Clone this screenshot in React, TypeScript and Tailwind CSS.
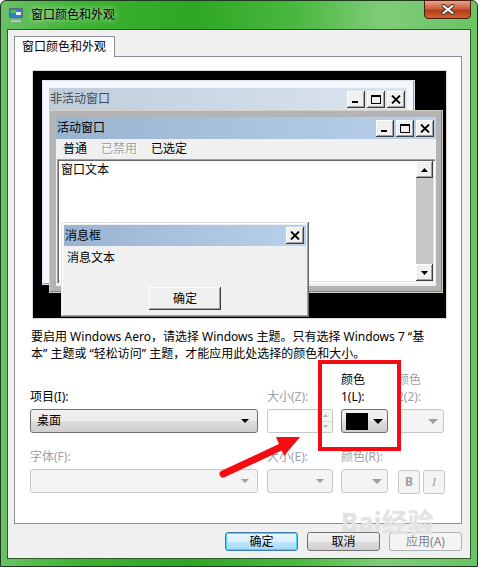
import React from "react"

const FONT = "font-['Noto_Sans','Noto_Sans_CJK_SC',sans-serif]"

function CapBtn({ kind }: { kind: "min" | "max" | "close" }) {
  return (
    <div className="w-[18px] h-[17px] bg-[#f0f0f0] shadow-[inset_-1px_-1px_0_#404040,inset_1px_1px_0_#ffffff,inset_-2px_-2px_0_#a0a0a0] flex items-center justify-center">
      <svg width="10" height="9" viewBox="0 0 10 9">
        {kind === "min" && <rect x="1" y="6" width="6" height="2" fill="#000" />}
        {kind === "max" && (
          <g fill="none" stroke="#000">
            <rect x="0.5" y="0.5" width="9" height="8" />
            <line x1="0" y1="1.5" x2="10" y2="1.5" />
          </g>
        )}
        {kind === "close" && (
          <g stroke="#000" strokeWidth="1.8">
            <line x1="1" y1="0.5" x2="9" y2="8.5" />
            <line x1="9" y1="0.5" x2="1" y2="8.5" />
          </g>
        )}
      </svg>
    </div>
  )
}

function DownTri({ color = "#000", w = 8 }: { color?: string; w?: number }) {
  return (
    <svg width={w} height={w / 2} viewBox="0 0 8 4">
      <polygon points="0,0 8,0 4,4" fill={color} />
    </svg>
  )
}

function Combo({ text, disabled, className }: { text?: string; disabled?: boolean; className: string }) {
  return (
    <div
      className={
        "h-[24px] rounded-[3px] border flex items-center justify-between pl-[6px] pr-[8px] " +
        (disabled
          ? "border-[#c5c8cb] bg-[#f4f4f4] "
          : "border-[#707070] bg-[linear-gradient(#f2f2f2_0%,#ebebeb_50%,#dddddd_51%,#cfcfcf_100%)] ") +
        className
      }
    >
      <span className="text-[12px] text-black">{text}</span>
      <DownTri color={disabled ? "#a0a0a0" : "#000"} />
    </div>
  )
}

function WinBtn({ label, variant }: { label: string; variant?: "default" | "disabled" }) {
  const base = "w-[73px] h-[19px] rounded-[3px] border flex items-center justify-center text-[12px] leading-none "
  if (variant === "default")
    return (
      <div className={base + "border-[#3c7fb1] bg-[linear-gradient(#eaf6fd_0%,#d9f0fc_50%,#bee6fd_51%,#a7d9f5_100%)] shadow-[inset_0_0_0_1px_#48d2f8]"}>
        {label}
      </div>
    )
  if (variant === "disabled")
    return <div className={base + "border-[#adb2b5] bg-[#f4f4f4] text-[#838383]"}>{label}</div>
  return (
    <div className={base + "border-[#707070] bg-[linear-gradient(#f2f2f2_0%,#ebebeb_50%,#dddddd_51%,#cfcfcf_100%)]"}>
      {label}
    </div>
  )
}

function Preview() {
  return (
    <div className="relative ml-[17px] mt-[13px] w-[415px] h-[249px] bg-black border border-[#d8d8d8] overflow-hidden">
      {/* inactive window */}
      <div className="absolute left-[9px] top-[9px] w-[373px] h-[205px] bg-[#f4f7fc] border border-[#dde4ee] shadow-[inset_-1px_-1px_0_#a0a0a0]">
        <div className="mt-[7px] ml-[6px] w-[358px] h-[22px] bg-[linear-gradient(90deg,#bfcddb,#dbe5f0)] flex items-center justify-between pl-[1px] pr-[2px]">
          <span className="text-[12px] text-[#434e54]">非活动窗口</span>
          <div className="flex gap-[2px]">
            <CapBtn kind="min" />
            <CapBtn kind="max" />
            <CapBtn kind="close" />
          </div>
        </div>
      </div>
      {/* active window */}
      <div className="absolute left-[16px] top-[39px] w-[394px] h-[183px] bg-[#b4b4b4] border border-[#d4d0c8] shadow-[inset_-1px_-1px_0_#808080] p-[6px]">
        <div className="w-full h-full bg-[#f0f0f0] flex flex-col">
          <div className="h-[22px] bg-[linear-gradient(90deg,#99b4d1,#b9d1ea)] flex items-center justify-between pl-[1px] pr-[2px]">
            <span className="text-[12px] text-black">活动窗口</span>
            <div className="flex gap-[2px]">
              <CapBtn kind="min" />
              <CapBtn kind="max" />
              <CapBtn kind="close" />
            </div>
          </div>
          <div className="h-[20px] flex items-center text-[12px] pl-[7px]">
            <span className="text-black">普通</span>
            <span className="ml-[14px] text-[#a0a0a0] [text-shadow:1px_1px_0_#fff]">已禁用</span>
            <span className="ml-[14px] text-black">已选定</span>
          </div>
          <div className="mx-[1px] h-[124px] bg-white shadow-[inset_1px_1px_0_#a0a0a0,inset_2px_2px_0_#696969,inset_-1px_-1px_0_#fff,inset_-2px_-2px_0_#e3e3e3] flex p-[2px]">
            <div className="flex-1 text-[12px] leading-[16px] pl-[2px] pt-[1px]">窗口文本</div>
            <div className="w-[17px] h-full bg-[#c8c8c8] flex flex-col justify-between">
              <div className="w-[17px] h-[17px] bg-[#f0f0f0] shadow-[inset_-1px_-1px_0_#404040,inset_1px_1px_0_#fff,inset_-2px_-2px_0_#a0a0a0] flex items-center justify-center">
                <svg width="7" height="4" viewBox="0 0 7 4"><polygon points="0,4 7,4 3.5,0" fill="#000" /></svg>
              </div>
              <div className="w-[17px] h-[17px] bg-[#f0f0f0] shadow-[inset_-1px_-1px_0_#404040,inset_1px_1px_0_#fff,inset_-2px_-2px_0_#a0a0a0] flex items-center justify-center">
                <svg width="7" height="4" viewBox="0 0 7 4"><polygon points="0,0 7,0 3.5,4" fill="#000" /></svg>
              </div>
            </div>
          </div>
        </div>
      </div>
      {/* message box */}
      <div className="absolute left-[28px] top-[151px] w-[248px] h-[95px] bg-[#f0f0f0] shadow-[inset_-1px_-1px_0_#696969,inset_1px_1px_0_#e3e3e3,inset_-2px_-2px_0_#a0a0a0,inset_2px_2px_0_#fff] p-[3px]">
        <div className="h-[21px] bg-[linear-gradient(90deg,#99b4d1,#b9d1ea)] flex items-center justify-between pl-[1px] pr-[2px]">
          <span className="text-[12px] text-black">消息框</span>
          <CapBtn kind="close" />
        </div>
        <div className="text-[12px] leading-[16px] pl-[3px] mt-[4px]">消息文本</div>
        <div className="ml-[85px] mt-[21px] w-[72px] h-[23px] bg-[#f0f0f0] shadow-[inset_-1px_-1px_0_#404040,inset_1px_1px_0_#fff,inset_-2px_-2px_0_#a0a0a0] flex items-center justify-center text-[12px]">
          确定
        </div>
      </div>
    </div>
  )
}

export default function App() {
  return (
    <div className={"relative w-[478px] h-[567px] flex flex-col rounded-t-[6px] border border-[#1d3a1a] bg-[linear-gradient(90deg,#6cc267_0%,#3fb335_15%,#2ea624_40%,#4ab840_62%,#7fcc79_80%,#6ac464_100%)] text-black " + FONT}>
      {/* title bar */}
      <div className="h-[28px] flex items-start shrink-0">
        <svg className="ml-[7px] mt-[6px]" width="16" height="16" viewBox="0 0 16 16">
          <rect x="1" y="1" width="14" height="10" rx="1" fill="#5a6a78" />
          <rect x="2" y="2" width="12" height="8" fill="#2f7fc9" />
          <rect x="3" y="3" width="5" height="3" fill="#54c04a" />
          <rect x="8" y="5" width="5" height="3" fill="#e8f0f8" />
          <rect x="6" y="11" width="4" height="2" fill="#8a96a0" />
          <rect x="3" y="13" width="10" height="2" fill="#b8c2ca" />
        </svg>
        <span className="ml-[7px] mt-[6px] text-[12px] leading-[16px] text-black [text-shadow:0_0_6px_#ffffff]">窗口颜色和外观</span>
        <div className="ml-auto mr-[6px] w-[47px] h-[19px] -mt-px rounded-b-[4px] border border-[#4a1d10] bg-[linear-gradient(#e8a48a_0%,#c9603e_45%,#b13b18_55%,#d0642c_100%)] flex items-center justify-center">
          <svg width="14" height="11" viewBox="0 0 14 11">
            <g stroke="#3a2a2a" strokeWidth="4" strokeLinecap="round">
              <line x1="2.5" y1="2" x2="11.5" y2="9" />
              <line x1="11.5" y1="2" x2="2.5" y2="9" />
            </g>
            <g stroke="#ffffff" strokeWidth="2.2" strokeLinecap="round">
              <line x1="2.5" y1="2" x2="11.5" y2="9" />
              <line x1="11.5" y1="2" x2="2.5" y2="9" />
            </g>
          </svg>
        </div>
      </div>

      {/* client area */}
      <div className="flex-1 mx-[6px] mb-[7px] border border-[#2c5a28] bg-[#f0f0f0] flex flex-col">
        <div className="pl-[6px] pt-[6px] flex">
          <div className="relative z-10 w-[101px] h-[21px] -mb-px bg-white border border-b-0 border-[#898c95] text-[12px] leading-[20px] pl-[7px]">
            窗口颜色和外观
          </div>
        </div>
        <div className="ml-[6px] w-[448px] h-[468px] bg-white border border-[#898c95] flex flex-col">
          <Preview />
          <p className="ml-[16px] mt-[9px] text-[12px] leading-[17px] whitespace-nowrap">
            要启用 Windows Aero，请选择 Windows 主题。只有选择 Windows 7 “基
            <br />
            本” 主题或 “轻松访问” 主题，才能应用此处选择的颜色和大小。
          </p>

          {/* row 1 */}
          <div className="mt-[9px] ml-[15px] flex items-end text-[12px] leading-[17px]">
            <div className="w-[228px]">项目(I):</div>
            <div className="w-[66px] ml-[9px] text-[#a0a0a0]">大小(Z):</div>
            <div className="w-[47px] ml-[8px]">
              颜色
              <br />
              1(L):
            </div>
            <div className="w-[46px] ml-[9px] text-[#a0a0a0]">
              颜色
              <br />
              2(2):
            </div>
          </div>
          <div className="mt-[4px] ml-[15px] flex">
            <Combo text="桌面" className="w-[228px]" />
            <div className="w-[66px] ml-[9px] h-[24px] flex border border-[#c5c8cb] rounded-[2px] bg-white">
              <div className="flex-1" />
              <div className="w-[15px] flex flex-col border-l border-[#dcdcdc]">
                <div className="flex-1 bg-[#f4f4f4] border-b border-[#dcdcdc] flex items-center justify-center">
                  <svg width="5" height="3" viewBox="0 0 5 3"><polygon points="0,3 5,3 2.5,0" fill="#b0b0b0" /></svg>
                </div>
                <div className="flex-1 bg-[#f4f4f4] flex items-center justify-center">
                  <svg width="5" height="3" viewBox="0 0 5 3"><polygon points="0,0 5,0 2.5,3" fill="#b0b0b0" /></svg>
                </div>
              </div>
            </div>
            <div className="w-[47px] ml-[8px] h-[24px] rounded-[3px] border border-[#707070] bg-[linear-gradient(#f2f2f2_0%,#ebebeb_50%,#dddddd_51%,#cfcfcf_100%)] flex items-center pl-[4px] pr-[4px]">
              <div className="w-[22px] h-[17px] bg-black" />
              <div className="ml-auto">
                <DownTri w={10} />
              </div>
            </div>
            <div className="w-[46px] ml-[10px] h-[24px] rounded-[3px] border border-[#c5c8cb] bg-[#f4f4f4] flex items-center justify-end pr-[5px]">
              <DownTri color="#a0a0a0" w={10} />
            </div>
          </div>

          {/* row 2 */}
          <div className="mt-[15px] ml-[15px] flex text-[12px] leading-[17px] text-[#a0a0a0]">
            <div className="w-[228px]">字体(F):</div>
            <div className="w-[66px] ml-[9px]">大小(E):</div>
            <div className="w-[47px] ml-[8px]">颜色(R):</div>
          </div>
          <div className="mt-[4px] ml-[15px] flex items-start">
            <Combo disabled className="w-[228px]" />
            <Combo disabled className="w-[66px] ml-[9px]" />
            <div className="w-[47px] ml-[8px] h-[24px] rounded-[3px] border border-[#c5c8cb] bg-[#f4f4f4] flex items-center justify-end pr-[5px]">
              <DownTri color="#a0a0a0" w={10} />
            </div>
            <div className="ml-[10px] mt-px w-[22px] h-[24px] rounded-[3px] border border-[#c5c8cb] bg-[#f4f4f4] flex items-center justify-center text-[12px] font-bold text-[#a0a0a0]">
              B
            </div>
            <div className="ml-[3px] mt-px w-[22px] h-[24px] rounded-[3px] border border-[#c5c8cb] bg-[#f4f4f4] flex items-center justify-center text-[12px] italic text-[#a0a0a0] font-['Liberation_Serif',serif]">
              I
            </div>
          </div>
        </div>

        {/* footer */}
        <div className="mt-[8px] pr-[8px] flex justify-end gap-[9px]">
          <WinBtn label="确定" variant="default" />
          <WinBtn label="取消" />
          <WinBtn label="应用(A)" variant="disabled" />
        </div>
      </div>

      {/* annotation: red box */}
      <div className="absolute left-[317px] top-[359px] w-[83px] h-[91px] border-[4px] border-[#f40c12]" />
      {/* annotation: red arrow */}
      <svg className="absolute left-0 top-0 pointer-events-none" width="478" height="567">
        <line x1="222" y1="473" x2="282" y2="445" stroke="#f40c12" strokeWidth="7" strokeLinecap="round" />
        <polygon points="299,436 283,455 275,436" fill="#f40c12" />
      </svg>
      {/* watermark */}
      <div className="absolute left-[340px] top-[508px] text-[26px] leading-none font-bold text-white/40 [text-shadow:0_0_1px_#d0d0d0] pointer-events-none">
        Bai经验
      </div>
    </div>
  )
}
